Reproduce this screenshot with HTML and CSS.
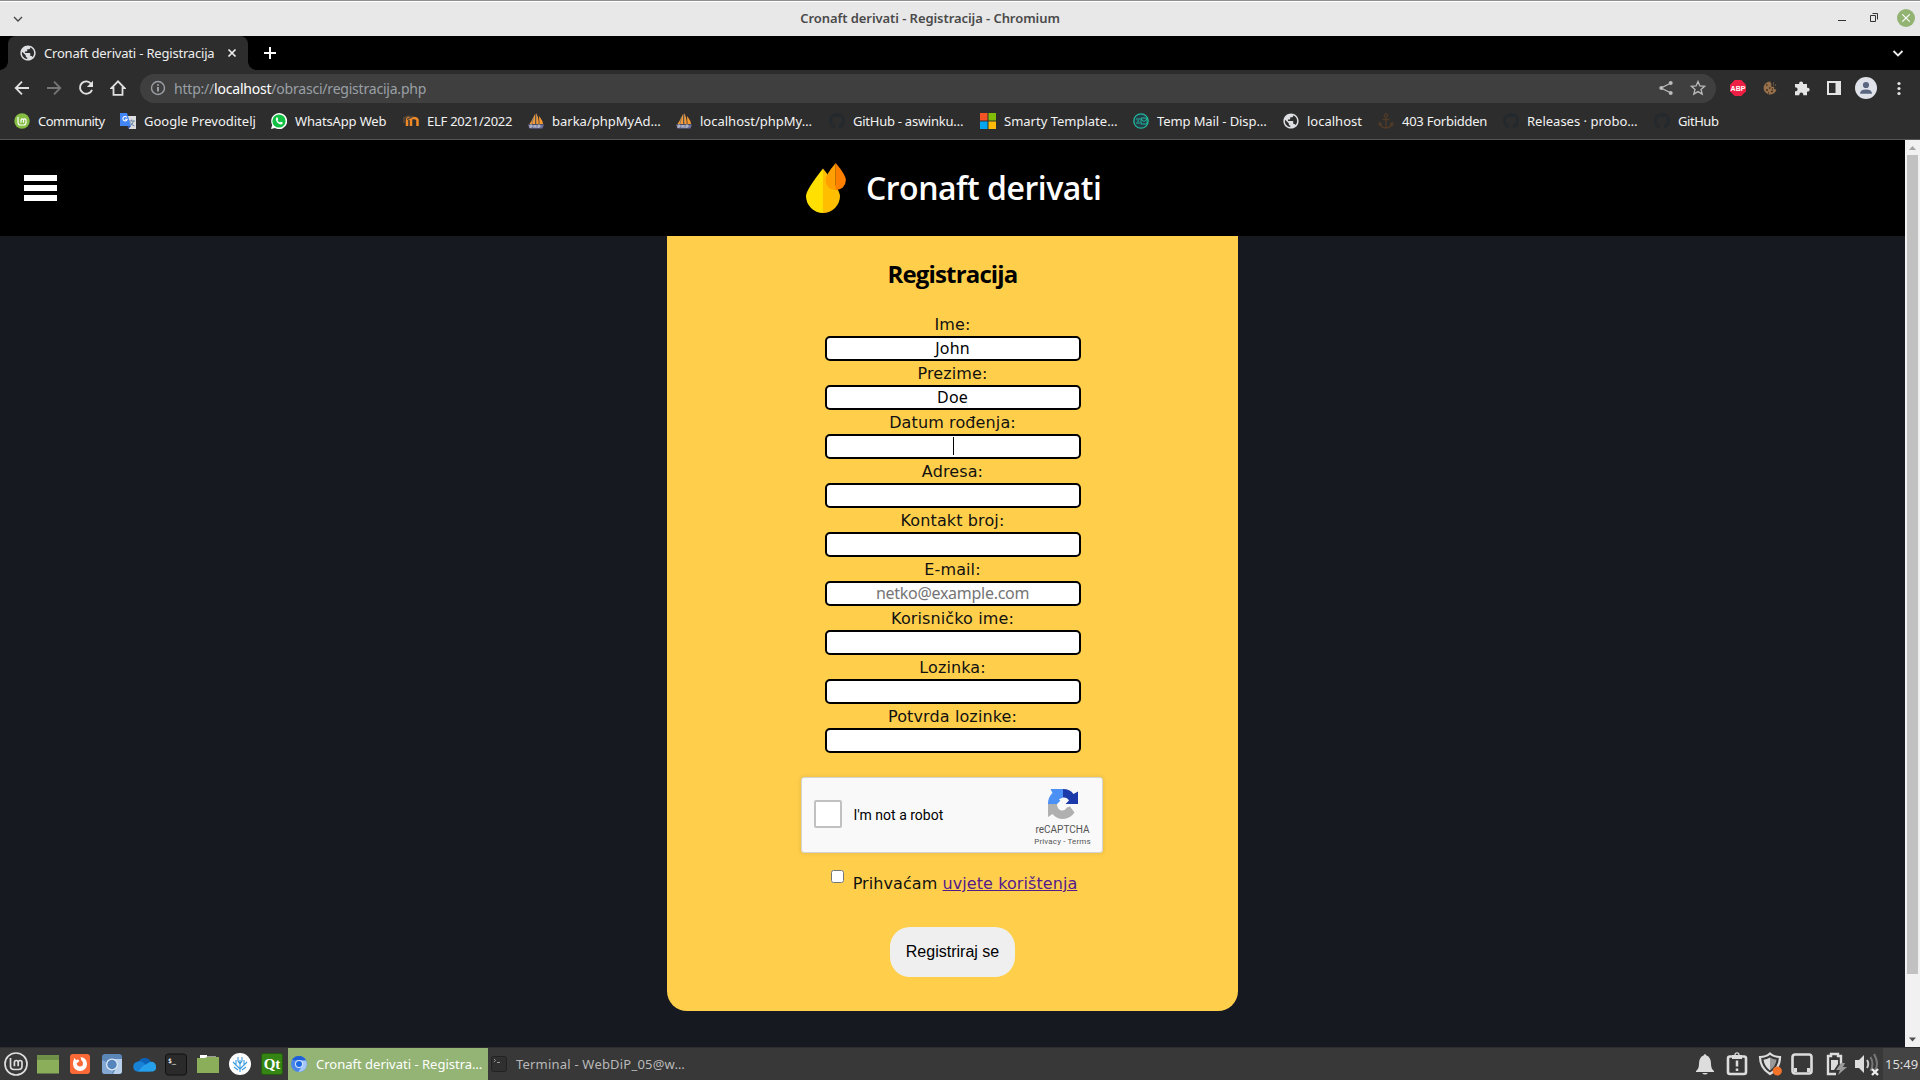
FILE: index.html
```html
<!DOCTYPE html>
<html lang="hr">
<head>
<meta charset="utf-8">
<title>Cronaft derivati - Registracija</title>
<link rel="stylesheet" href="styles.css">
</head>
<body>
<svg width="0" height="0" class="defs">
  <symbol id="globe" viewBox="1.500 1.500 21 21"><path d="M12 2C6.480 2 2 6.480 2 12s4.480 10 10 10 10-4.480 10-10S17.520 2 12 2zm-1 17.930c-3.950-.49-7-3.850-7-7.930 0-.62.08-1.210.21-1.790L9 15v1c0 1.100.9 2 2 2v1.930zm6.900-2.540c-.26-.81-1-1.390-1.900-1.390h-1v-3c0-.55-.45-1-1-1H8v-2h2c.55 0 1-.45 1-1V7h2c1.100 0 2-.9 2-2v-.41c2.930 1.190 5 4.060 5 7.410 0 2.080-.8 3.970-2.100 5.390z" fill="#dedfe3"/></symbol>
  <symbol id="boat" viewBox="0 0 16 16"><path d="M7 1v10H1.500Q5 6 7 1ZM8 0q3 5 2.700 11H8ZM11 3q4 5 4 8h-3.500Z" fill="#f79a32"/><path d="M5.500 4 4 11M8 1v10" stroke="#8b7a6a"/><path d="M0 11.500h16l-1.500 4H1.500Z" fill="#6b6f9c"/><path d="M2 15v-3h2v2H2m4-2v3m0-2h2m0-1v3m2 0v-3h2v2h-2" fill="none" stroke="#ddd" stroke-width=".7"/></symbol>
  <symbol id="octo" viewBox="0 0 16 16"><path d="M8 0C3.580 0 0 3.580 0 8c0 3.540 2.290 6.530 5.470 7.590.4.070.55-.17.55-.38 0-.19-.01-.82-.01-1.490-2.010.37-2.530-.49-2.690-.94-.09-.23-.48-.94-.82-1.130-.28-.15-.68-.52-.01-.53.63-.01 1.080.58 1.230.82.72 1.210 1.870.87 2.330.66.07-.52.28-.87.51-1.070-1.780-.2-3.640-.89-3.640-3.950 0-.87.31-1.590.82-2.150-.08-.2-.36-1.020.08-2.120 0 0 .67-.21 2.200.82a7.600 7.600 0 0 1 4 0c1.530-1.040 2.200-.82 2.200-.82.44 1.100.16 1.920.08 2.120.51.56.82 1.270.82 2.150 0 3.070-1.870 3.750-3.650 3.950.29.25.54.73.54 1.480 0 1.070-.01 1.930-.01 2.200 0 .21.15.46.55.38A8 8 0 0 0 16 8c0-4.420-3.580-8-8-8Z" fill="#24292e"/></symbol>
</svg>

<header class="titlebar">
  <svg class="tb-menu" width="12" height="12" viewBox="0 0 12 12"><path d="m2 4 4 4 4-4" fill="none" stroke="#444" stroke-width="1.300"/></svg>
  <span class="tb-text">Cronaft derivati - Registracija - Chromium</span>
  <svg class="tb-btns" width="84" height="20" viewBox="0 0 84 20"><path d="M6 12.500h8" stroke="#333"/><path d="M38.500 7.500h5v6h-5ZM40.500 5.500h5v6" fill="none" stroke="#333"/><circle cx="74" cy="10" r="9" fill="#92b372"/><path d="m70.300 6.300 7.400 7.400m0-7.400-7.400 7.400" stroke="#fff" stroke-width="1.200"/></svg>
</header>

<div class="tabstrip">
  <div class="tab">
    <svg width="16" height="16"><use href="#globe"/></svg>
    <span class="tab-text">Cronaft derivati - Registracija</span>
    <svg width="10" height="10" viewBox="0 0 10 10"><path d="m1.500 1.500 7 7m0-7-7 7" stroke="#eee" stroke-width="1.700"/></svg>
  </div>
  <svg class="newtab" width="12" height="12" viewBox="0 0 12 12"><path d="M6 0v12M0 6h12" stroke="#fff" stroke-width="2"/></svg>
  <svg class="tabsearch" width="12" height="12" viewBox="0 0 12 12"><path d="m1.500 4 4.500 4.500L10.500 4" fill="none" stroke="#eee" stroke-width="1.800"/></svg>
</div>

<div class="toolbar">
  <svg width="16" height="16" viewBox="0 0 16 16"><path d="M15 8H2m6-6.300L1.700 8 8 14.300" fill="none" stroke="#e0e0e0" stroke-width="1.800"/></svg>
  <svg width="16" height="16" viewBox="0 0 16 16"><path d="M1 8h13M8 1.700 14.300 8 8 14.300" fill="none" stroke="#777" stroke-width="1.800"/></svg>
  <svg width="16" height="16" viewBox="0 0 16 16"><path d="M13.300 4A6.200 6.200 0 1 0 14 9.800" fill="none" stroke="#e0e0e0" stroke-width="1.900"/><path d="M15 .8V7H8.800Z" fill="#e0e0e0"/></svg>
  <svg width="16" height="16" viewBox="0 0 16 16"><path d="M8 1.300 1.500 8h2v6.800h9V8h2Z" fill="none" stroke="#e0e0e0" stroke-width="1.800"/></svg>
  <div class="omnibox">
    <svg width="16" height="16" viewBox="0 0 16 16"><circle cx="8" cy="8" r="6.500" fill="none" stroke="#9aa0a6" stroke-width="1.400"/><path d="M8 7v4.500M8 4.300v1.500" stroke="#b5b8bc" stroke-width="1.600"/></svg>
    <span class="url">http://<b>localhost</b>/obrasci/registracija.php</span>
    <svg class="share" width="16" height="16" viewBox="0 0 16 16"><path d="M13 3 3 8l10 5" fill="none" stroke="#bbb" stroke-width="1.300"/><g fill="#bbb"><circle cx="12.700" cy="3" r="2"/><circle cx="3.300" cy="8" r="2"/><circle cx="12.700" cy="13" r="2"/></g></svg>
    <svg width="16" height="16" viewBox="0 0 16 16"><path d="m8 1.500 1.900 4.400 4.800.4-3.700 3.100 1.200 4.700L8 11.600l-4.200 2.500L5 9.400 1.300 6.300l4.800-.4Z" fill="none" stroke="#bbb" stroke-width="1.300"/></svg>
  </div>
  <svg width="16" height="16" viewBox="0 0 16 16"><path d="M4.700 0h6.600L16 4.700v6.600L11.300 16H4.700L0 11.300V4.700Z" fill="#ed1f45"/><text x="8" y="10.800" class="abp">ABP</text></svg>
  <svg width="16" height="16" viewBox="0 0 16 16"><path d="M8 1.500a6.500 6.500 0 1 0 6.400 8L12 9l.3-2L9 6.500 9.500 4Z" fill="#95704a"/><path d="M4 5h1.500M7 8h1.500M4 10h2M9 11.500h2M10 9h1M6 13h1" stroke="#443020" stroke-width="1.300"/><path d="M11 3h1m1 2h1m-3 0h1" stroke="#95704a"/></svg>
  <svg width="16" height="16" viewBox="0 0 16 16"><path d="M1 4h4.200a2 2 0 1 1 3.800 0h4v3.800a2 2 0 1 1 0 3.800v3.600H9.200a2 2 0 1 0-3.800 0H1v-4a2 2 0 1 0 0-3.800Z" fill="#e4e4e4"/></svg>
  <svg width="16" height="16" viewBox="0 0 16 16"><path d="M2 2h12v12H2Z" fill="none" stroke="#e4e4e4" stroke-width="2"/><path d="M9.500 1H15v14H9.500Z" fill="#e4e4e4"/></svg>
  <svg class="avatar" width="22" height="22" viewBox="0 0 22 22"><circle cx="11" cy="11" r="11" fill="#dfe2e9"/><circle cx="11" cy="8" r="3.100" fill="#5b6780"/><path d="M5 16.800q0-4.300 6-4.300t6 4.300Z" fill="#5b6780"/></svg>
  <svg width="16" height="16" viewBox="0 0 16 16"><g fill="#e4e4e4"><circle cx="9" cy="3.500" r="1.600"/><circle cx="9" cy="8.500" r="1.600"/><circle cx="9" cy="13.500" r="1.600"/></g></svg>
</div>

<nav class="bookmarks">
  <span class="bm b1"><svg width="16" height="16" viewBox="0 0 16 16"><circle cx="8" cy="8" r="7.700" fill="#86be43"/><path d="M4 4v5.500Q4 12 6.500 12h3q2.500 0 2.500-2.500V7.200q0-1.400-1.250-1.400T9.500 7.200v2.500m0-2.500q0-1.400-1.250-1.400T7 7.200v2.500" fill="none" stroke="#fff" stroke-width="1.200"/></svg>Community</span>
  <span class="bm b2"><svg width="16" height="16" viewBox="0 0 16 16"><path d="M6 3h10v13H9Z" fill="#dcdde0"/><path d="M8.500 8H15m-3.500-1.500V8m2 0q-1 4-4 5m1-3.500q1 2.500 4 3.500" fill="none" stroke="#6b86a0"/><path d="M0 0h7l4 13H0Z" fill="#4285f4"/><path d="M8.500 16 7.500 13H11Z" fill="#3154a5"/><path d="M6.900 4.400A2.200 2.200 0 1 0 7.200 6.300H5" fill="none" stroke="#fff" stroke-width="1.100"/></svg>Google Prevoditelj</span>
  <span class="bm b3"><svg width="16" height="16" viewBox="0 0 16 16"><path d="M0 16 1.200 12A8 8 0 1 1 4 14.900Z" fill="#fff"/><circle cx="8" cy="8" r="6.600" fill="#12c143"/><path d="M5.300 4.500q1-.8 1.600.7l.3 1-.7 1Q7.300 9 9 9.600l1-.9 1.700.8q.2 1.500-1.400 1.900Q8.400 11.600 6.200 9.500 4 7 5.300 4.500Z" fill="#fff"/></svg>WhatsApp Web</span>
  <span class="bm b4"><svg width="16" height="16" viewBox="0 0 16 16"><path d="M4 13V7q0-2 2-2t2 2v6m-1-6q0-2 3.500-2T14.500 7v6" fill="none" stroke="#f08a28" stroke-width="2.500"/><path d="M0 5.500 5 3l4 1-5 2.500M1 6v4" fill="none" stroke="#5b4a3a" stroke-width="1.500"/></svg>ELF 2021/2022</span>
  <span class="bm b5"><svg width="16" height="16"><use href="#boat"/></svg>barka/phpMyAd…</span>
  <span class="bm b6"><svg width="16" height="16"><use href="#boat"/></svg>localhost/phpMy…</span>
  <span class="bm b7"><svg width="16" height="16"><use href="#octo"/></svg>GitHub - aswinku…</span>
  <span class="bm b8"><svg width="16" height="16" viewBox="0 0 16 16"><path fill="#f35325" d="M0 0h7.500v7.500H0z"/><path fill="#81bc06" d="M8.500 0H16v7.500H8.500z"/><path fill="#05a6f0" d="M0 8.500h7.500V16H0z"/><path fill="#ffba08" d="M8.500 8.500H16V16H8.500z"/></svg>Smarty Template…</span>
  <span class="bm b9"><svg width="16" height="16" viewBox="0 0 16 16"><circle cx="8" cy="8" r="7.200" fill="#253b48" stroke="#20b898" stroke-width="1.300"/><path d="M8 5h6v6H8Zm0 1 3 2.500L14 6M3 6h4M4 8h2M3 10h4" fill="none" stroke="#20b898"/></svg>Temp Mail - Disp…</span>
  <span class="bm b10"><svg width="16" height="16"><use href="#globe"/></svg>localhost</span>
  <span class="bm b11"><svg width="16" height="16" viewBox="0 0 16 16"><circle cx="8" cy="2.500" r="1.700" fill="none" stroke="#503a28" stroke-width="1.200"/><path d="M8 4v11M4.500 6.500h7M1.700 10q1 4.700 6.300 5 5.300-.3 6.300-5M.7 12.500l1-3 2.300 2m11.300 1-1-3-2.300 2" fill="none" stroke="#503a28" stroke-width="1.400"/></svg>403 Forbidden</span>
  <span class="bm b12"><svg width="16" height="16"><use href="#octo"/></svg>Releases · probo…</span>
  <span class="bm b13"><svg width="16" height="16"><use href="#octo"/></svg>GitHub</span>
</nav>

<div class="viewport">
  <div class="page">
    <div class="site-head">
      <div class="burger"><i></i><i></i><i></i></div>
      <svg class="logo" width="40" height="50" viewBox="0 0 40 50"><path d="M17 5.500Q0 27 0 33a17 17 0 0 0 17 17Z" fill="#ffe000"/><path d="M17 5.500Q34 27 34 33a17 17 0 0 1-17 17Z" fill="#ffbf00"/><path d="M29.700 0Q19.500 12 19.500 17a10.200 10.200 0 0 0 10.200 10.200Z" fill="#ff9f00"/><path d="M29.700 0Q39.900 12 39.900 17a10.200 10.200 0 0 1-10.200 10.200Z" fill="#ff7f00"/></svg>
      <h1>Cronaft derivati</h1>
    </div>
    <form class="card">
      <h2>Registracija</h2>
      <label>Ime:</label><input class="filled" value="John">
      <label>Prezime:</label><input class="filled" value="Doe">
      <label>Datum rođenja:</label><div class="focused"><input></div>
      <label>Adresa:</label><input>
      <label>Kontakt broj:</label><input>
      <label>E-mail:</label><input placeholder="netko@example.com">
      <label>Korisničko ime:</label><input>
      <label>Lozinka:</label><input>
      <label>Potvrda lozinke:</label><input>
      <div class="captcha">
        <span class="cbox"></span><span class="robot">I'm not a robot</span>
        <div class="brand">
          <svg width="30" height="30" viewBox="0 0 30 30"><path d="M15 0v8.500l-4 1.800 1.300 1.500L9 15H0Q0 8 4.500 4L2.500 0Z" fill="#4a90f5"/><path d="M15 0q7 0 10.500 5L30 2.500V15H17.500l3.500-3.500Q19 8 15 8.500Z" fill="#1c3aa9"/><path d="M0 15h9q0 4 3 6 4 2 7-2.500l3-1 4.500 6Q22 30 15 30 8.500 30 4.500 25L0 28Z" fill="#b0b0b0"/></svg>
          <span class="rc">reCAPTCHA</span>
          <span class="pt">Privacy - Terms</span>
        </div>
      </div>
      <div class="accept"><input type="checkbox"><span>Prihvaćam <a href="#">uvjete korištenja</a></span></div>
      <button type="button">Registriraj se</button>
    </form>
  </div>
  <div class="scroll">
    <svg width="15" height="15" viewBox="0 0 15 15"><path d="m4 10 3.500-4 3.500 4Z" fill="#a3a3a3"/></svg>
    <div class="thumb"></div>
    <svg width="15" height="15" viewBox="0 0 15 15"><path d="m4 5.500 3.500 4 3.500-4Z" fill="#505050"/></svg>
  </div>
</div>

<footer class="taskbar">
  <div class="launchers">
    <svg width="24" height="24" viewBox="0 0 24 24"><circle cx="12" cy="12" r="11" fill="none" stroke="#ddd" stroke-width="1.700"/><path d="M6.500 6v8q0 3.500 3.500 3.500h4.500q3.500 0 3.500-3.500v-3.500q0-2-1.900-2t-1.900 2v3.800m0-3.800q0-2-1.900-2t-1.900 2v3.800" fill="none" stroke="#ddd" stroke-width="1.700"/></svg>
    <svg width="24" height="24" viewBox="0 0 24 24"><path d="M1 3h22v18.500H1Z" fill="#8bae5a"/><path d="M1 3h22v3.500H1Z" fill="#6f9048"/><path d="M1 7h22" stroke="#5c783b"/></svg>
    <svg width="24" height="24" viewBox="0 0 24 24"><rect x="2" y="2" width="20" height="20" rx="3" fill="#f96a36"/><path d="M5 12q0-3.500 1.500-6l1.500 2 2-.5 1.500 1.500-3 2.500q1 3 3.500 3 3 0 3-3 0-2-1.500-3l-1-3.500Q19 6 19 12a7 7 0 0 1-14 0Z" fill="#fff"/></svg>
    <svg width="24" height="24" viewBox="0 0 24 24"><rect x="2" y="2" width="20" height="20" rx="3" fill="#5b87b8"/><path d="M2 8v11q0 3 3 3h7l3-8Z" fill="#83a8d3"/><path d="M12 7h10v12q0 3-3 3h-6l4-8Z" fill="#b8d0ec"/><circle cx="12" cy="12.500" r="6" fill="#dce9f7"/><circle cx="12" cy="12.500" r="4.700" fill="#5685bd"/></svg>
    <svg width="24" height="24" viewBox="0 0 24 24"><path d="M6 11a7 7 0 0 1 13-1l2 3-9 6Z" fill="#0c62b8"/><path d="M5 19.500A5 5 0 0 1 4.500 10Q9 8 12 11l7 8.500Z" fill="#1782d6"/><path d="m11 14 7-4a5 5 0 0 1 3 9.500H6Z" fill="#27a0ec"/></svg>
    <svg width="24" height="24" viewBox="0 0 24 24"><rect x="1.500" y="2" width="21" height="21" rx="3" fill="#2a2a2a" stroke="#111"/><text x="4" y="11" class="prompt">$_</text></svg>
    <svg width="24" height="24" viewBox="0 0 24 24"><path d="M4 5.500V3h7v1.500h9V8H4Z" fill="#fff"/><path d="M1 6h8l2-1h12v16H1Z" fill="#8bae5a"/></svg>
    <svg width="24" height="24" viewBox="0 0 24 24"><circle cx="12" cy="12" r="11" fill="#fff"/><path d="M12 20V8m0 9-4-4V8m0 5-3-3m7 7 4-4V8m0 5 3-3M12 12l-2-3V5m2 7 2-3V5m-4 13-4-3m8 3 4-3" fill="none" stroke="#3d9be0" stroke-width="1.100"/></svg>
    <svg width="24" height="24" viewBox="0 0 24 24"><rect x="1.500" y="1.500" width="21" height="21" rx="2" fill="#358515" stroke="#235c0d"/><text x="12" y="17" class="qt">Qt</text></svg>
  </div>
  <div class="task active"><svg width="16" height="16" viewBox="0 0 16 16"><circle cx="8" cy="8" r="8" fill="#4a86e8"/><path d="M1 4a8 8 0 0 1 14 .5H8Z" fill="#1d5fd6"/><path d="M15 4.500A8 8 0 0 1 7.500 16L11.500 9 10 4.500Z" fill="#a5c6f8"/><circle cx="8" cy="8" r="4" fill="#dce8fb"/><circle cx="8" cy="8" r="3" fill="#1d6ae5"/></svg><span>Cronaft derivati - Registra…</span></div>
  <div class="task idle"><svg width="16" height="16" viewBox="0 0 16 16"><rect x=".5" y=".5" width="15" height="15" rx="2" fill="#303030" stroke="#222"/><path d="m3 3 1.500 1.500L3 6M6 6.500h3" fill="none" stroke="#999"/></svg><span>Terminal - WebDiP_05@w…</span></div>
  <div class="tray">
    <svg width="24" height="24" viewBox="0 0 24 24"><path d="M3 19q3-2 3-7 0-7 4.500-8.500Q12 .5 13.500 3.500 18 5 18 12q0 5 3 7v1H3ZM9 21h6q-3 3-6 0Z" fill="#ddd"/></svg>
    <svg width="24" height="24" viewBox="0 0 24 24"><rect x="3" y="4.500" width="18" height="17.500" rx="2" fill="none" stroke="#ddd" stroke-width="2.600"/><path d="M7 3h10v4H7Z" fill="#ddd"/><circle cx="12" cy="2.800" r="2" fill="none" stroke="#ddd" stroke-width="1.300"/><path d="M12 8.500v6M12 16.500v2.500" stroke="#ddd" stroke-width="2.500"/></svg>
    <svg width="24" height="24" viewBox="0 0 24 24"><path d="M12 1.500q4 3.500 10 3.500 0 11-10 17Q2 16 2 5 8 5 12 1.500Z" fill="none" stroke="#ddd" stroke-width="2.200"/><path d="M12 5.500q-3 2-6.500 2.300Q6.500 14.500 12 18.500Z" fill="#ddd"/><path d="M12 5.500q3 2 6.500 2.300Q17.500 14.500 12 18.500Z" fill="#999"/><circle cx="19.300" cy="19" r="4.600" fill="#f37329"/></svg>
    <svg width="24" height="24" viewBox="0 0 24 24"><rect x="2.500" y="2.500" width="19" height="19" rx="2.500" fill="none" stroke="#ddd" stroke-width="2.600"/><path d="M4 16h3v4H4Zm13 0h3v4h-3Z" fill="#ddd"/></svg>
    <svg width="24" height="24" viewBox="0 0 24 24"><path d="M13 22H5V4h3V2h7v2h3v8" fill="none" stroke="#ddd" stroke-width="2.400"/><path d="M8 8h7v4l-4 6H8Z" fill="#ddd"/><path d="m18 11-5 7h4l-2 5 9-8h-4l2-4Z" fill="#999"/></svg>
    <svg width="24" height="24" viewBox="0 0 24 24"><path d="M0 8h4l5-5v18l-5-5H0Z" fill="#ddd"/><path d="M12 8q2.500 4 0 8" fill="none" stroke="#ccc" stroke-width="2"/><path d="M15.500 5q4 7 0 14M19 2q5.500 10 1 16" fill="none" stroke="#777" stroke-width="2"/><path d="m17 17 6 6m0-6-6 6" stroke="#eee" stroke-width="2.400"/></svg>
  </div>
  <div class="clock">15:49</div>
</footer>
</body>
</html>
```
FILE: styles.css
```css
* { box-sizing: border-box; }
body {
  margin: 0; width: 1920px; height: 1080px; overflow: hidden;
  display: flex; flex-direction: column;
  font: 13px "Noto Sans", sans-serif; background: #161920;
}
svg { flex: none; display: block; }
.defs { position: absolute; }

.titlebar {
  height: 36px; flex: none; background: #e8e8e8; border-top: 1px solid #908e90; box-shadow: inset 0 1px #fff;
  display: grid; grid-template-columns: 84px 1fr 88px; align-items: center; color: #4a4a4a;
}
.tb-menu { margin-left: 12px; }
.tb-text { text-align: center; font-weight: 600; letter-spacing: -.07px; padding: 0 56px 1px 0; }
.tb-btns { margin-bottom: 1px; }

.tabstrip { height: 34px; flex: none; background: #000; display: flex; align-items: center; padding-left: 8px; }
.tab {
  width: 240px; height: 34px; background: #2d2d2d; border-radius: 8px 8px 0 0; color: #eee;
  display: flex; align-items: center; padding-left: 12px; position: relative;
}
.tab::before, .tab::after { content: ""; position: absolute; bottom: 0; width: 8px; height: 8px; }
.tab::before { left: -8px; background: radial-gradient(circle at 0 0, #000 7.500px, #2d2d2d 8px); }
.tab::after { right: -8px; background: radial-gradient(circle at 100% 0, #000 7.500px, #2d2d2d 8px); }
.tab-text { width: 191px; flex: none; padding-left: 8px; white-space: nowrap; letter-spacing: -.19px; }
.newtab { margin-left: 16px; }
.tabsearch { margin-left: auto; margin-right: 16px; }

.toolbar { height: 37px; flex: none; background: #2d2d2d; display: flex; align-items: center; gap: 16px; padding: 0 0 1px 14px; }
.omnibox {
  width: 1576px; height: 29px; border-radius: 15px; background: #3f3f3f; margin: 0 -2px;
  display: flex; align-items: center; padding: 0 10px; gap: 16px;
}
.url { margin-left: -8px; font-size: 14px; letter-spacing: -.21px; color: #9aa0a6; }
.url b { font-weight: 400; color: #fff; }
.share { margin-left: auto; }
.avatar { margin: 0 -3px; }
.abp { font: 700 7px "Liberation Sans", sans-serif; fill: #fff; text-anchor: middle; }

.bookmarks { height: 33px; flex: none; background: #2d2d2d; border-bottom: 1px solid #565656; display: flex; padding: 0 0 4px 14px; color: #f2f2f2; }
.bm { display: flex; align-items: center; gap: 8px; white-space: nowrap; }
.b1 { width: 106px; letter-spacing: -.5px; }
.b2 { width: 151px; }
.b3 { width: 132px; letter-spacing: -.15px; }
.b4 { width: 125px; letter-spacing: -.25px; }
.b5 { width: 148px; }
.b6 { width: 153px; }
.b7 { width: 151px; letter-spacing: -.25px; }
.b8 { width: 153px; }
.b9 { width: 150px; letter-spacing: -.1px; }
.b10 { width: 95px; }
.b11 { width: 125px; letter-spacing: -.25px; }
.b12 { width: 151px; }
.b13 { width: 80px; letter-spacing: -.45px; }

.viewport { height: 907px; flex: none; display: flex; }
.page { width: 1905px; background: #161920; }
.site-head { height: 96px; background: #000; display: flex; align-items: center; padding-left: 24px; }
.burger { width: 33px; display: flex; flex-direction: column; gap: 4px; }
.burger i { height: 6px; background: #fff; }
.logo { margin-left: 749px; }
h1 { margin: 0 0 0 20px; color: #fff; font: 650 32px/44px "Open Sans", sans-serif; letter-spacing: -.5px; white-space: nowrap; padding-bottom: 1px; }

.card {
  width: 571px; height: 775px; margin-left: 667px; background: #ffcf4b; border-radius: 0 0 20px 20px;
  display: flex; flex-direction: column; align-items: center; font: 16px "DejaVu Sans", sans-serif; color: #111;
}
h2 { margin: 21px 0; font: 700 24px/34px "Open Sans", sans-serif; letter-spacing: -.85px; color: #000; }
label { height: 24px; line-height: 26px; letter-spacing: .12px; }
.card > input, .focused {
  width: 256px; height: 25px; border: 2px solid #000; border-radius: 5px; background: #fff; margin: 0; padding: 0 0 2px;
  font: 16px "Noto Sans", sans-serif; letter-spacing: -.28px; text-align: center; color: #000;
}
.card > .filled { letter-spacing: .2px; }
.card > input::placeholder { color: #757575; }
.focused { display: flex; justify-content: center; padding: 1px 0 0 1px; }
.focused input { width: 1px; height: 18px; padding: 0; border: 0; background: #000; }
.captcha {
  width: 302px; height: 76px; margin: 24px 2px 0 0; background: #f9f9f9; border: 1px solid #d3d3d3; border-radius: 3px;
  box-shadow: 0 0 4px 1px rgba(0,0,0,.08); display: flex; padding-left: 12px; align-items: center;
  font-family: Roboto, sans-serif; color: #000;
}
.cbox { width: 28px; height: 28px; border: 2px solid #c1c1c1; border-radius: 2px; background: #fff; margin-bottom: 2px; }
.robot { margin-left: 12px; font-size: 14px; }
.brand { margin-left: auto; width: 78px; height: 74px; padding-top: 11px; display: flex; flex-direction: column; align-items: center; color: #555; }
.rc { font-size: 10px; line-height: 12px; margin-top: 5px; }
.pt { font-size: 8px; line-height: 10px; margin-top: 1px; letter-spacing: .15px; }
.accept { height: 74px; padding: 17px 0 0 3px; display: flex; align-items: flex-start; color: #111; letter-spacing: .08px; }
.accept input { width: 13px; height: 13px; margin: 0 9px 0 0; }
.accept span { line-height: 19px; padding-top: 4px; }
.accept a { color: #551a8b; }
button { width: 125px; height: 50px; border: 0; border-radius: 20px; background: #efefef; font: 16px "Liberation Sans", sans-serif; color: #000; padding: 0; }

.scroll { width: 15px; background: #f1f1f1; display: flex; flex-direction: column; }
.thumb { height: 819px; width: 11px; margin: 0 2px auto; background: #c1c1c1; }

.taskbar { height: 33px; flex: none; background: #383838; border-top: 1px solid #2c2c2c; display: flex; color: #b8b8b8; }
.launchers { width: 288px; padding-left: 4px; display: flex; align-items: center; gap: 8px; }
.task { width: 200px; display: flex; align-items: center; gap: 9px; padding-left: 3px; white-space: nowrap; }
.active { background: #93b474; color: #fff; }
.idle { letter-spacing: .2px; }
.prompt { font: 700 6.500px "DejaVu Sans Mono", monospace; fill: #eee; }
.qt { font: 700 15px "Liberation Serif", serif; fill: #fff; text-anchor: middle; }
.tray { margin-left: auto; width: 190px; display: flex; align-items: center; gap: 8.400px; }
.clock { width: 37px; background: #444; line-height: 33px; padding-left: 2px; color: #ddd; }
```
